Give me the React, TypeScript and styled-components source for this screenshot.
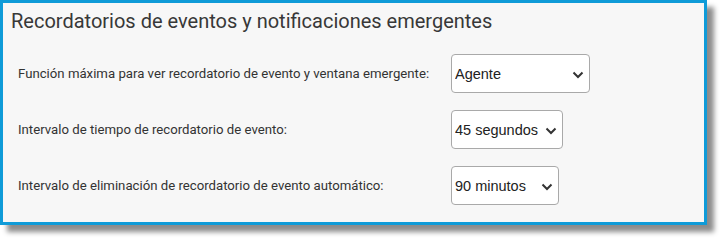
import React from "react";
import styled, { createGlobalStyle } from "styled-components";

const Global = createGlobalStyle`
  html, body { margin: 0; padding: 0; background: #ffffff; }
  body { font-family: Roboto, "Liberation Sans", sans-serif; min-height: 239px; }
`;

const Panel = styled.section`
  box-sizing: border-box;
  width: 707px;
  height: 225px;
  border: 3px solid #0f9bd8;
  background: #f7f7f7;
  box-shadow: 7px 7px 5px rgba(0, 0, 0, 0.45);
  padding: 6px 0 0 8px;
`;

const Title = styled.h2`
  margin: 0;
  font-family: Roboto, sans-serif;
  font-weight: 400;
  font-size: 20px;
  line-height: 24px;
  color: #383838;
`;

const Rows = styled.div`
  display: grid;
  grid-template-columns: 433px auto;
  row-gap: 17px;
  align-items: center;
  margin: 21px 0 0 7px;
`;

const Label = styled.label`
  font-family: Roboto, sans-serif;
  font-size: 13.2px;
  color: #333333;
`;

const SelectWrap = styled.div<{ $w: number }>`
  position: relative;
  width: ${(p) => p.$w}px;
  height: 39px;
`;

const Select = styled.select`
  appearance: none;
  -webkit-appearance: none;
  box-sizing: border-box;
  width: 100%;
  height: 100%;
  border: 1px solid #a9a9a9;
  border-radius: 4px;
  background: #ffffff;
  padding: 0 0 0 3px;
  font-family: "Liberation Sans", Arial, sans-serif;
  font-size: 14.5px;
  color: #222222;
  outline: none;
`;

const Chevron = styled.svg`
  position: absolute;
  right: 6px;
  top: 50%;
  width: 12px;
  height: 8px;
  margin-top: -3px;
  pointer-events: none;
`;

const rows = [
  { label: "Función máxima para ver recordatorio de evento y ventana emergente:", value: "Agente", w: 139 },
  { label: "Intervalo de tiempo de recordatorio de evento:", value: "45 segundos", w: 112 },
  { label: "Intervalo de eliminación de recordatorio de evento automático:", value: "90 minutos", w: 108 },
];

export default function App() {
  return (
    <>
      <Global />
      <Panel>
        <Title>Recordatorios de eventos y notificaciones emergentes</Title>
        <Rows>
          {rows.map((r) => (
            <React.Fragment key={r.label}>
              <Label>{r.label}</Label>
              <SelectWrap $w={r.w}>
                <Select defaultValue={r.value}>
                  <option>{r.value}</option>
                </Select>
                <Chevron viewBox="0 0 12 8">
                  <path d="M1.5 1.5 L6 6 L10.5 1.5" fill="none" stroke="#333" strokeWidth="2" />
                </Chevron>
              </SelectWrap>
            </React.Fragment>
          ))}
        </Rows>
      </Panel>
    </>
  );
}
